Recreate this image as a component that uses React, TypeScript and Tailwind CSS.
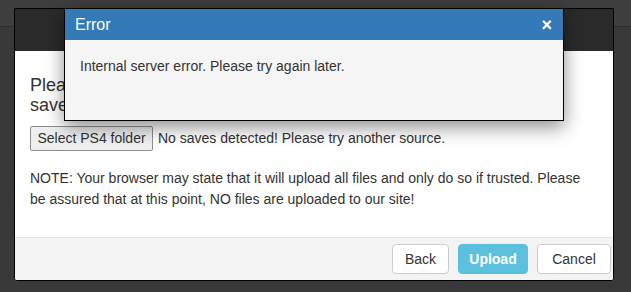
const font = { fontFamily: '"Liberation Sans", Arial, sans-serif' }

function ErrorDialog() {
  return (
    <div className="absolute left-[64px] top-[8px] w-[500px] border border-black bg-[#f5f5f5] shadow-[0_6px_18px_rgba(0,0,0,0.45)]">
      <div className="flex h-[31px] items-center justify-between bg-[#337ab7] pl-[10px] pr-[11px] text-white">
        <span className="text-[16px]">Error</span>
        <span className="text-[18px] font-bold leading-none">×</span>
      </div>
      <div className="h-[80px] px-[15px] pt-[16px] text-[14px] leading-[20px] text-[#333]">
        Internal server error. Please try again later.
      </div>
    </div>
  )
}

export default function App() {
  return (
    <div className="relative h-[292px] w-[631px] overflow-hidden bg-[#393939]" style={font}>
      <div className="h-[27px] border-b border-[#2f2f2f] bg-[#3e3e3e]" />
      <div className="absolute left-[14px] top-[8px] w-[600px] overflow-hidden rounded-b-[3px] border border-black bg-white">
        <div className="h-[42px] bg-[#2a2a2a]" />
        <div className="h-[186px] px-[15px] pt-[25px] text-[14px] text-[#333]">
          <h4 className="text-[18px] leading-[19.8px]">
            Please select the folder holding your PS4
            <br />
            saves to upload them.
          </h4>
          <div className="mt-[10px] flex items-center gap-[5px]">
            <button className="h-[25px] w-[123px] rounded-[2px] border border-[#8f8f8f] bg-[#efefef] text-[14px] text-[#333]">
              Select PS4 folder
            </button>
            <span>No saves detected! Please try another source.</span>
          </div>
          <p className="mt-[17px] leading-[21px]">
            NOTE: Your browser may state that it will upload all files and only do so if trusted. Please
            be assured that at this point, NO files are uploaded to our site!
          </p>
        </div>
        <div className="flex h-[43px] items-center justify-end gap-[9px] border-t border-[#e5e5e5] bg-[#f3f3f3] pr-[2px]">
          <button className="h-[30px] w-[57px] rounded-[4px] border border-[#ccc] bg-white text-[14px] text-[#333]">
            Back
          </button>
          <button className="h-[30px] w-[70px] rounded-[4px] border border-[#5bc0de] bg-[#5bc0de] text-[14px] font-bold text-white">
            Upload
          </button>
          <button className="h-[30px] w-[74px] rounded-[4px] border border-[#ccc] bg-white text-[14px] text-[#333]">
            Cancel
          </button>
        </div>
      </div>
      <ErrorDialog />
    </div>
  )
}
